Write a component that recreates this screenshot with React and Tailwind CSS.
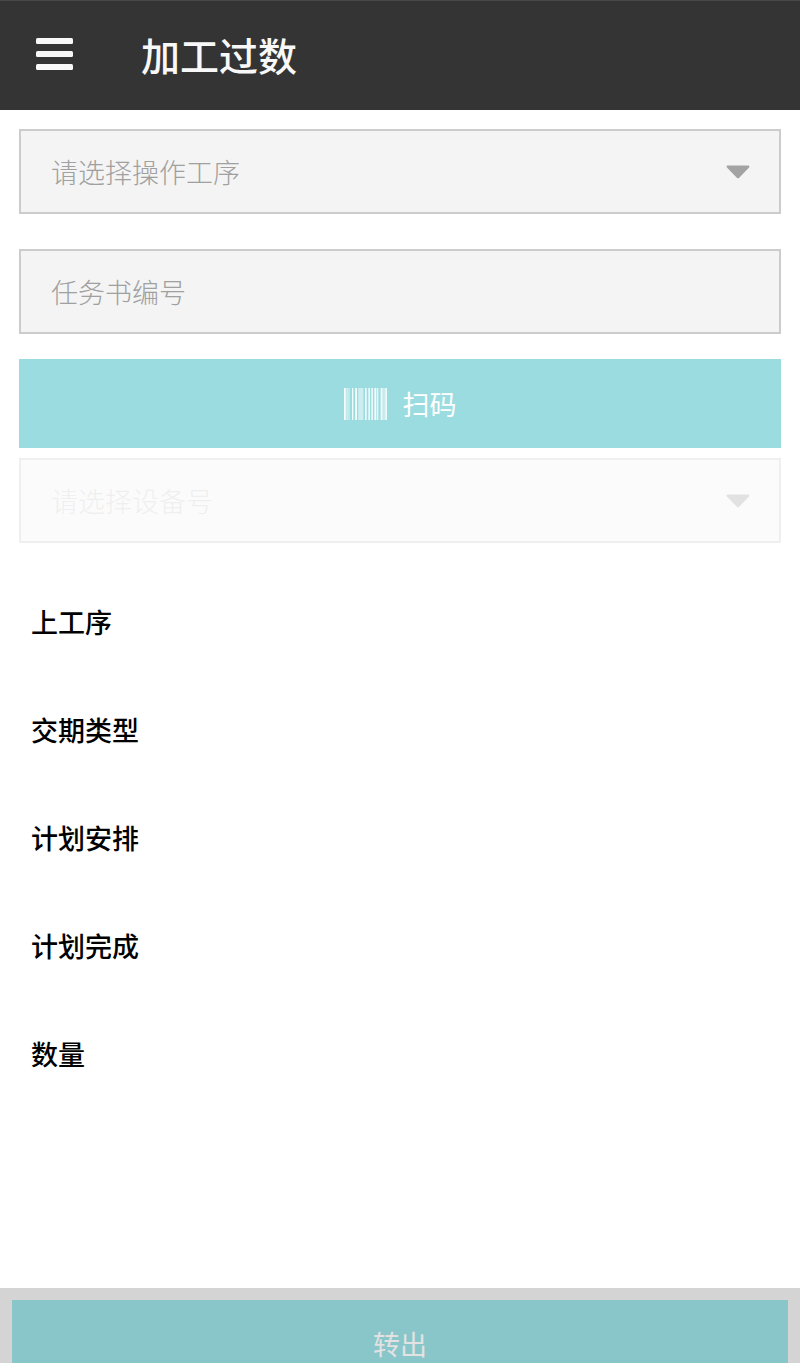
import React from "react";

const details = [
  { label: "上工序", value: "" },
  { label: "交期类型", value: "" },
  { label: "计划安排", value: "" },
  { label: "计划完成", value: "" },
  { label: "数量", value: "" },
];

// [x, width, opacity] of each bar
const bars = [
  [0, 1.8, 0.9],
  [2.3, 1.6, 0.55],
  [4.4, 1.2, 0.6],
  [8, 1.3, 0.85],
  [11.2, 1.8, 0.9],
  [14.2, 5.2, 0.5],
  [21, 1.6, 0.95],
  [24.4, 1.5, 0.9],
  [27.4, 1.5, 0.9],
  [30.4, 1.8, 0.95],
  [32.8, 1.6, 0.75],
  [36.6, 2, 0.9],
  [39.4, 1.2, 0.75],
  [41.2, 1.8, 0.85],
];

const App = () => {
  return (
    <div className="min-h-screen flex flex-col bg-white pb-[3px] font-['Noto_Sans_CJK_SC',sans-serif] text-[27px] leading-10">

      {/* Header */}
      <header className="flex items-center h-[110px] px-9 pb-[3px] bg-[#343434] border-t border-[#484848] text-[#f8f8f8]">
        <button type="button" aria-label="菜单" className="w-[37px]">
          <svg viewBox="0 0 37 32" className="block w-full" fill="currentColor">
            <rect y="0" width="37" height="6" rx="1.5" />
            <rect y="13" width="37" height="6" rx="1.5" />
            <rect y="26" width="37" height="6" rx="1.5" />
          </svg>
        </button>
        <h1 className="ml-[68px] text-[39px] font-medium">加工过数</h1>
      </header>

      {/* Form */}
      <main className="flex-1 px-[19px] pt-[19px]">
        <SelectField label="请选择操作工序" />

        <input
          type="text"
          aria-label="任务书编号"
          placeholder="任务书编号"
          className="block w-full h-[85px] mt-[35px] px-[30px] bg-[#f4f4f4] border-2 border-[#cccccc] font-light placeholder:text-[#a0a0a0] placeholder:opacity-100"
        />

        <button
          type="button"
          className="flex items-center justify-center gap-4 w-full h-[89px] mt-[25px] bg-[#9bdce0] text-white"
        >
          <svg viewBox="0 0 43 32" className="w-[43px] h-8" fill="currentColor">
            {bars.map(([x, width, opacity]) => (
              <rect key={x} x={x} width={width} height="32" opacity={opacity} />
            ))}
          </svg>
          <span>扫码</span>
        </button>

        <div className="mt-[10px] opacity-30">
          <SelectField label="请选择设备号" disabled />
        </div>

        {/* Task details */}
        <dl className="mt-[25px] px-3">
          {details.map((item) => (
            <div key={item.label} className="flex items-center h-[108px]">
              <dt className="font-medium text-black">{item.label}</dt>
              <dd className="ml-6">{item.value}</dd>
            </div>
          ))}
        </dl>
      </main>

      {/* Footer */}
      <footer className="h-[75px] px-3 pt-3 bg-[#d4d4d4] overflow-hidden">
        <button type="button" className="block w-full h-[88px] bg-[#89c6ca] text-[#e2e2e2]">
          转出
        </button>
      </footer>

    </div>
  );
};

const SelectField = ({ label, disabled = false }) => (
  <div className="relative">
    <select
      aria-label={label}
      disabled={disabled}
      defaultValue=""
      className="block appearance-none w-full h-[85px] px-[30px] bg-[#f4f4f4] border-2 border-[#cccccc] font-light text-[#a0a0a0] disabled:text-[#cccccc] disabled:opacity-100"
    >
      <option value="">{label}</option>
    </select>
    <svg
      viewBox="0 0 24 14"
      className="absolute right-[31px] top-9 w-6 h-[14px] pointer-events-none"
      fill="#a3a3a3"
    >
      <path d="M1.6 0.5h20.8c1 0 1.4 1.2.7 1.9L13.2 12.8c-.7.7-1.7.7-2.4 0L.9 2.4C.2 1.7.6.5 1.6.5z" />
    </svg>
  </div>
);

export default App;
